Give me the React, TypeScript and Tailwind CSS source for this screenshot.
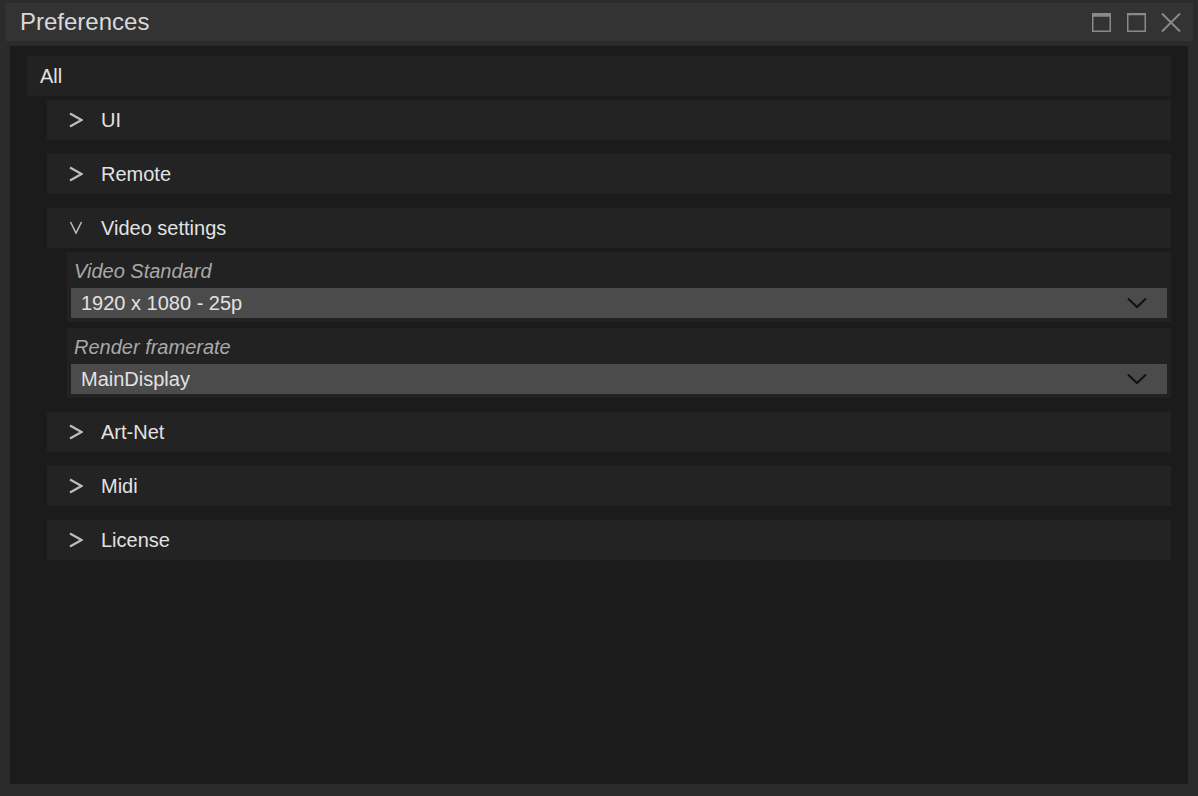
import React from 'react';

const font = { fontFamily: '"Liberation Sans", Arial, sans-serif' };

const ChevronRight = () => (
  <svg width="14" height="16" viewBox="0 0 14 16" className="shrink-0">
    <polyline points="1,1.5 12.5,8 1,14.5" fill="none" stroke="#bdbdbd" strokeWidth="2.2" />
  </svg>
);

const ChevronOpen = () => (
  <svg width="14" height="16" viewBox="0 0 14 16" className="shrink-0">
    <polyline points="1.5,2 7,13 12.5,2" fill="none" stroke="#bdbdbd" strokeWidth="1.5" />
  </svg>
);

const SelectArrow = () => (
  <svg width="20" height="12" viewBox="0 0 20 12">
    <polyline points="1,1.5 10,10 19,1.5" fill="none" stroke="#111111" strokeWidth="2" />
  </svg>
);

const Section: React.FC<{ title: string; open?: boolean; children?: React.ReactNode }> = ({ title, open, children }) => (
  <div className="flex flex-col mb-[14px]">
    <div className="h-[40px] bg-[#232323] flex items-center pl-[22px]">
      {open ? <ChevronOpen /> : <ChevronRight />}
      <span className="ml-[18px] text-[20px] text-[#e2e2e2]">{title}</span>
    </div>
    {open && <div className="flex flex-col gap-[6px] mt-[4px] pl-[20px]">{children}</div>}
  </div>
);

const SelectField: React.FC<{ label: string; value: string }> = ({ label, value }) => (
  <div className="h-[70px] bg-[#222222] flex flex-col">
    <div className="h-[36px] flex items-center pl-[7px] pt-[2px] text-[20px] italic text-[#a9a9a9]">{label}</div>
    <div className="mx-[4px] h-[30px] bg-[#4b4b4b] flex items-center justify-between pl-[10px] pr-[20px]">
      <span className="text-[20px] text-[#e2e2e2]">{value}</span>
      <SelectArrow />
    </div>
  </div>
);

export default function App() {
  return (
    <div className="w-[1198px] h-[796px] bg-[#2b2b2b] flex flex-col overflow-hidden" style={font}>
      <div className="mx-[5px] mt-[3px] h-[38px] bg-[#333333] flex items-center justify-between pl-[15px] pr-[12px]">
        <span className="text-[24px] text-[#d9d9d9]">Preferences</span>
        <div className="flex items-center">
          <svg width="19" height="19" viewBox="0 0 19 19">
            <rect x="0.75" y="0.75" width="17.5" height="17.5" fill="none" stroke="#8a8a8a" strokeWidth="1.5" />
            <rect x="0.75" y="0.75" width="17.5" height="3" fill="#8a8a8a" />
          </svg>
          <svg width="19" height="19" viewBox="0 0 19 19" className="ml-[16px]">
            <rect x="0.75" y="0.75" width="17.5" height="17.5" fill="none" stroke="#8a8a8a" strokeWidth="1.5" />
            <rect x="0.75" y="0.75" width="17.5" height="1.5" fill="#8a8a8a" />
          </svg>
          <svg width="20" height="19" viewBox="0 0 20 19" className="ml-[15px]">
            <path d="M1 0.5 L19 18.5 M19 0.5 L1 18.5" stroke="#8a8a8a" strokeWidth="2" />
          </svg>
        </div>
      </div>

      <div className="mx-[10px] mt-[5px] h-[738px] bg-[#1b1b1b] pt-[10px] px-[17px] flex flex-col">
        <div className="h-[40px] bg-[#222222] flex items-center pl-[13px]">
          <span className="text-[20px] text-[#e2e2e2]">All</span>
        </div>
        <div className="flex flex-col mt-[4px] pl-[20px]">
          <Section title="UI" />
          <Section title="Remote" />
          <Section title="Video settings" open>
            <SelectField label="Video Standard" value="1920 x 1080 - 25p" />
            <SelectField label="Render framerate" value="MainDisplay" />
          </Section>
          <Section title="Art-Net" />
          <Section title="Midi" />
          <Section title="License" />
        </div>
      </div>
    </div>
  );
}
